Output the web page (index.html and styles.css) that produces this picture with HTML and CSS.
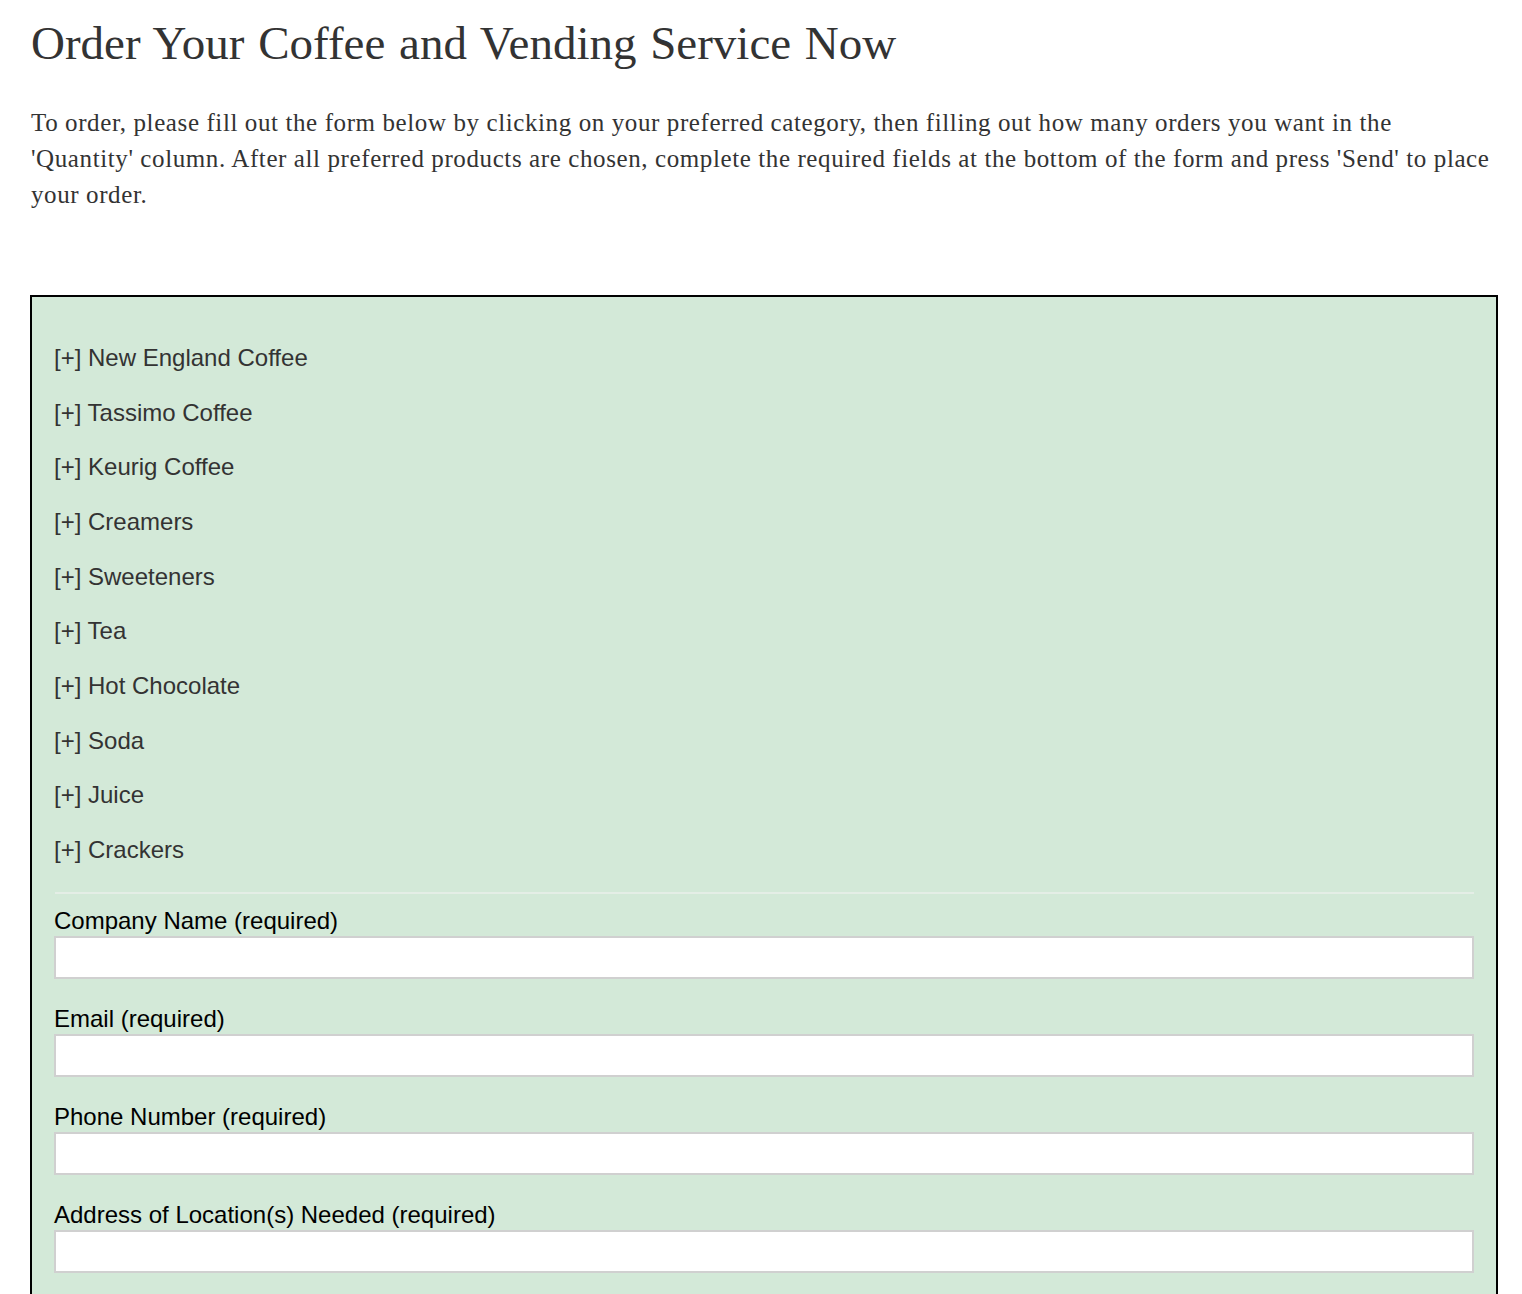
FILE: index.html
```html
<!DOCTYPE html>
<html>
<head>
<meta charset="utf-8">
<link rel="stylesheet" href="styles.css">
</head>
<body>
<main class="page">
  <h1 class="title">Order Your Coffee and Vending Service Now</h1>
  <p class="intro">To order, please fill out the form below by clicking on your preferred category, then filling out how many orders you want in the 'Quantity' column. After all preferred products are chosen, complete the required fields at the bottom of the form and press 'Send' to place your order.</p>
  <form class="order">
    <ul class="cats">
      <li>[+] New England Coffee</li>
      <li>[+] Tassimo Coffee</li>
      <li>[+] Keurig Coffee</li>
      <li>[+] Creamers</li>
      <li>[+] Sweeteners</li>
      <li>[+] Tea</li>
      <li>[+] Hot Chocolate</li>
      <li>[+] Soda</li>
      <li>[+] Juice</li>
      <li>[+] Crackers</li>
    </ul>
    <hr class="sep">
    <div class="field"><label>Company Name (required)</label><input type="text"></div>
    <div class="field"><label>Email (required)</label><input type="text"></div>
    <div class="field"><label>Phone Number (required)</label><input type="text"></div>
    <div class="field"><label>Address of Location(s) Needed (required)</label><input type="text"></div>
  </form>
</main>
</body>
</html>
```
FILE: styles.css
```css
html, body { margin: 0; padding: 0; background: #fff; }
.page { padding: 0 24px 0 30px; }
.title {
  font-family: "Liberation Serif", serif;
  font-weight: normal;
  font-size: 47px;
  word-spacing: 2px;
  color: #333;
  margin: 0;
  padding: 15px 0 0 1px;
  line-height: 56px;
}
.intro {
  font-family: "Liberation Serif", serif;
  font-size: 25px;
  letter-spacing: 0.6px;
  line-height: 36px;
  color: #333;
  margin: 34px 0 0 1px;
}
.order {
  margin-top: 82px;
  border: 2px solid #000;
  background: #d3e9d8;
  padding: 34px 22px 40px 21px;
}
.cats { list-style: none; margin: 0; padding: 0; }
.cats li {
  font-family: "Liberation Sans", Arial, sans-serif;
  font-size: 24px;
  color: #333;
  line-height: 26.67px;
  padding: 14px 0 14px 1px;
}
.sep { border: 0; height: 2px; background: #e4eee6; margin: 14px 0 12px 2px; }
.field { margin-bottom: 25px; }
.field label {
  display: block;
  font-family: "Liberation Sans", Arial, sans-serif;
  font-size: 24px;
  color: #000;
  line-height: 30px;
  padding-left: 1px;
}
.field input {
  display: block;
  box-sizing: border-box;
  width: calc(100% - 1px);
  margin-left: 1px;
  height: 43px;
  border: 2px solid #d0d0d0;
  background: #fff;
}
```
